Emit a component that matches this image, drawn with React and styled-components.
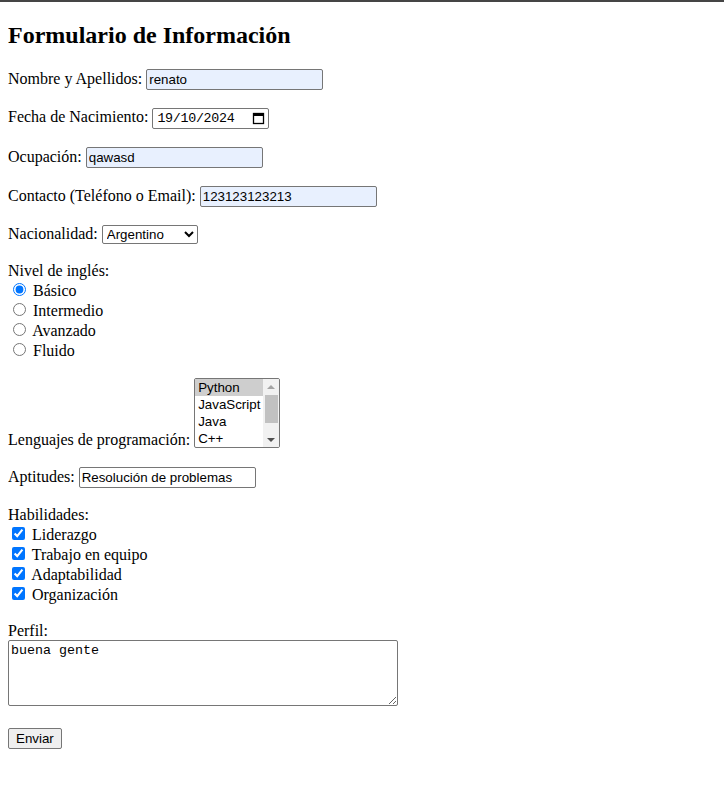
import React from "react";
import styled, { createGlobalStyle } from "styled-components";

const GlobalStyle = createGlobalStyle`
  html {
    border-top: 2px solid #454545;
    background: #fff;
  }
  body {
    margin: 8px;
    font-family: "Liberation Serif", "Times New Roman", serif;
    font-size: 16px;
    color: #000;
  }
`;

const Title = styled.h2`
  font-size: 24px;
  font-weight: bold;
  margin: 12px 0 19.92px;
`;

const Form = styled.form`
  display: block;
`;

const Field = styled.div`
  margin-bottom: 18px;
`;

const Label = styled.label``;

const TextInput = styled.input`
  box-sizing: border-box;
  width: 177px;
  height: 21px;
  padding: 1px 2px;
  border: 1px solid #767676;
  border-radius: 2px;
  background: ${(p) => (p.$filled ? "#e8f0fe" : "#fff")};
  font-family: "Liberation Sans", Arial, sans-serif;
  font-size: 13.33px;
  color: #000;
`;

const DateField = styled.span`
  box-sizing: border-box;
  display: inline-flex;
  align-items: center;
  justify-content: space-between;
  width: 117px;
  height: 21px;
  padding: 0 3px 0 4px;
  border: 1px solid #767676;
  border-radius: 2px;
  background: #fff;
  font-family: "Liberation Mono", "Courier New", monospace;
  font-size: 13.33px;
  color: #000;
  letter-spacing: -0.3px;
`;

const Select = styled.select`
  box-sizing: border-box;
  width: 96px;
  height: 19px;
  border: 1px solid #767676;
  border-radius: 2px;
  background: #fff;
  font-family: "Liberation Sans", Arial, sans-serif;
  font-size: 13.33px;
  color: #000;
`;

const ListBox = styled.span`
  box-sizing: border-box;
  display: inline-block;
  width: 86px;
  height: 70px;
  border: 1px solid #767676;
  border-radius: 2px;
  background: #fff;
  overflow: hidden;
  vertical-align: -3px;
  font-family: "Liberation Sans", Arial, sans-serif;
  font-size: 13.33px;
  color: #000;
`;

const ListInner = styled.span`
  display: flex;
  height: 100%;
`;

const ListOptions = styled.span`
  display: flex;
  flex-direction: column;
  flex: 1;
`;

const ListOption = styled.span`
  display: block;
  height: 17px;
  line-height: 17px;
  padding: 0 3px;
  white-space: nowrap;
  background: ${(p) => (p.$selected ? "#cecece" : "transparent")};
`;

const Scrollbar = styled.span`
  display: flex;
  flex-direction: column;
  align-items: center;
  width: 16px;
  background: #f1f1f1;
`;

const ScrollArrow = styled.span`
  width: 0;
  height: 0;
  margin: ${(p) => (p.$down ? "auto 0 5px" : "6px 0 0")};
  border-left: 4px solid transparent;
  border-right: 4px solid transparent;
  ${(p) =>
    p.$down ? "border-top: 4px solid #505050;" : "border-bottom: 4px solid #a3a3a3;"}
`;

const ScrollThumb = styled.span`
  width: 13px;
  height: 28px;
  margin-top: 6px;
  background: #c1c1c1;
`;

const Choice = styled.div`
  display: block;
`;

const TextArea = styled.textarea`
  box-sizing: border-box;
  width: 390px;
  height: 66px;
  padding: 2px;
  border: 1px solid #767676;
  border-radius: 2px;
  font-family: "Liberation Mono", "Courier New", monospace;
  font-size: 13.33px;
  color: #000;
  display: inline-block;
  vertical-align: baseline;
`;

const SubmitButton = styled.button`
  box-sizing: border-box;
  height: 21px;
  padding: 1px 7px;
  border: 1px solid #767676;
  border-radius: 2px;
  background: #efefef;
  font-family: "Liberation Sans", Arial, sans-serif;
  font-size: 13.33px;
  color: #000;
`;

const CalendarIcon = () => (
  <svg width="13" height="13" viewBox="0 0 13 13" aria-hidden="true">
    <rect x="1.5" y="1.5" width="10" height="10" fill="none" stroke="#000" strokeWidth="1.3" />
    <rect x="1.5" y="1.5" width="10" height="2.5" fill="#000" />
  </svg>
);

const niveles = ["Básico", "Intermedio", "Avanzado", "Fluido"];
const lenguajes = ["Python", "JavaScript", "Java", "C++"];
const habilidades = ["Liderazgo", "Trabajo en equipo", "Adaptabilidad", "Organización"];

export default function App() {
  return (
    <>
      <GlobalStyle />
      <Title>Formulario de Información</Title>
      <Form onSubmit={(e) => e.preventDefault()}>
        <Field>
          <Label htmlFor="nombre">Nombre y Apellidos:</Label>{" "}
          <TextInput id="nombre" type="text" defaultValue="renato" $filled />
        </Field>
        <Field>
          <Label>Fecha de Nacimiento:</Label>{" "}
          <DateField>
            <span>19/10/2024</span>
            <CalendarIcon />
          </DateField>
        </Field>
        <Field>
          <Label htmlFor="ocupacion">Ocupación:</Label>{" "}
          <TextInput id="ocupacion" type="text" defaultValue="qawasd" $filled />
        </Field>
        <Field>
          <Label htmlFor="contacto">Contacto (Teléfono o Email):</Label>{" "}
          <TextInput id="contacto" type="text" defaultValue="123123123213" $filled />
        </Field>
        <Field>
          <Label htmlFor="nacionalidad">Nacionalidad:</Label>{" "}
          <Select id="nacionalidad" defaultValue="Argentino">
            <option>Argentino</option>
            <option>Chileno</option>
            <option>Uruguayo</option>
            <option>Peruano</option>
          </Select>
        </Field>
        <Field>
          <Label>Nivel de inglés:</Label>
          {niveles.map((n, i) => (
            <Choice key={n}>
              <input type="radio" name="nivel" id={`nivel-${i}`} defaultChecked={i === 0} />{" "}
              <label htmlFor={`nivel-${i}`}>{n}</label>
            </Choice>
          ))}
        </Field>
        <Field>
          <Label>Lenguajes de programación:</Label>{" "}
          <ListBox>
            <ListInner>
              <ListOptions>
                {lenguajes.map((l, i) => (
                  <ListOption key={l} $selected={i === 0}>
                    {l}
                  </ListOption>
                ))}
              </ListOptions>
              <Scrollbar>
                <ScrollArrow />
                <ScrollThumb />
                <ScrollArrow $down />
              </Scrollbar>
            </ListInner>
          </ListBox>
        </Field>
        <Field>
          <Label htmlFor="aptitudes">Aptitudes:</Label>{" "}
          <TextInput id="aptitudes" type="text" defaultValue="Resolución de problemas" />
        </Field>
        <Field>
          <Label>Habilidades:</Label>
          {habilidades.map((h, i) => (
            <Choice key={h}>
              <input type="checkbox" id={`hab-${i}`} defaultChecked />{" "}
              <label htmlFor={`hab-${i}`}>{h}</label>
            </Choice>
          ))}
        </Field>
        <Field>
          <Label htmlFor="perfil">Perfil:</Label>
          <br />
          <TextArea id="perfil" defaultValue="buena gente" />
        </Field>
        <SubmitButton type="submit">Enviar</SubmitButton>
      </Form>
    </>
  );
}
